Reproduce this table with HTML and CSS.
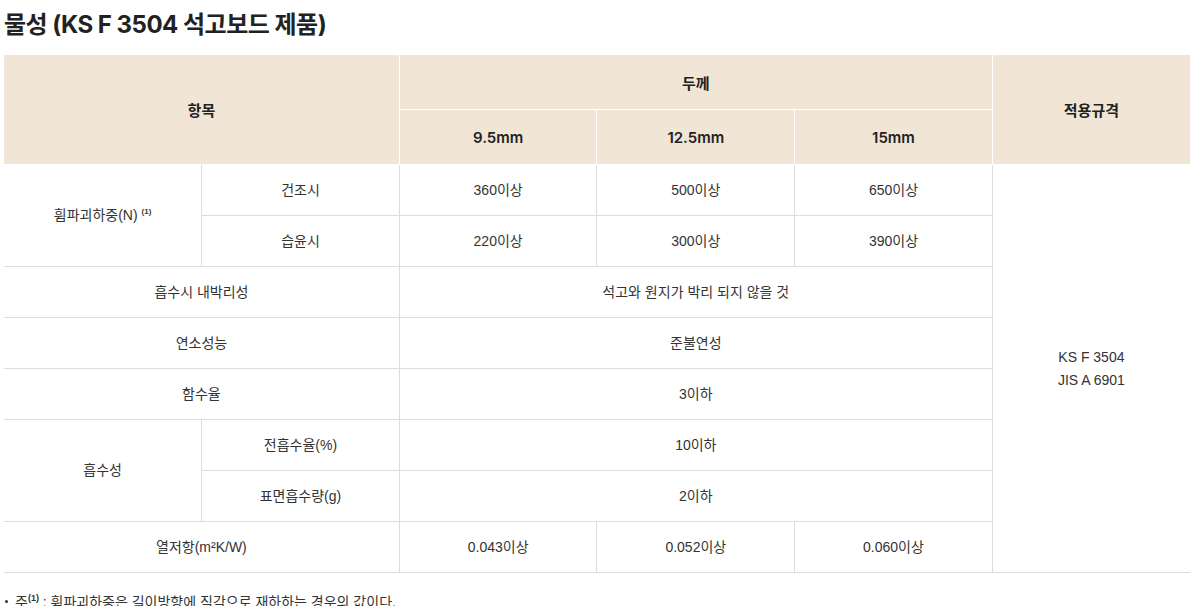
FILE: index.html
```html
<!DOCTYPE html>
<html lang="ko">
<head>
<meta charset="utf-8">
<link rel="stylesheet" href="styles.css">
</head>
<body>
<div class="page">
  <h2 class="title">물성 (KS F 3504 석고보드 제품)</h2>
  <table class="spec">
    <colgroup>
      <col><col><col><col><col><col>
    </colgroup>
    <thead>
      <tr>
        <th colspan="2" rowspan="2">항목</th>
        <th colspan="3">두께</th>
        <th rowspan="2">적용규격</th>
      </tr>
      <tr>
        <th>9.5mm</th>
        <th>12.5mm</th>
        <th>15mm</th>
      </tr>
    </thead>
    <tbody>
      <tr>
        <td rowspan="2">휨파괴하중(N) <sup>(1)</sup></td>
        <td>건조시</td>
        <td>360이상</td>
        <td>500이상</td>
        <td>650이상</td>
        <td rowspan="8" class="last">KS F 3504<br>JIS A 6901</td>
      </tr>
      <tr>
        <td>습윤시</td>
        <td>220이상</td>
        <td>300이상</td>
        <td>390이상</td>
      </tr>
      <tr>
        <td colspan="2">흡수시 내박리성</td>
        <td colspan="3">석고와 원지가 박리 되지 않을 것</td>
      </tr>
      <tr>
        <td colspan="2">연소성능</td>
        <td colspan="3">준불연성</td>
      </tr>
      <tr>
        <td colspan="2">함수율</td>
        <td colspan="3">3이하</td>
      </tr>
      <tr>
        <td rowspan="2">흡수성</td>
        <td>전흡수율(%)</td>
        <td colspan="3">10이하</td>
      </tr>
      <tr>
        <td>표면흡수량(g)</td>
        <td colspan="3">2이하</td>
      </tr>
      <tr>
        <td colspan="2">열저항(m²K/W)</td>
        <td>0.043이상</td>
        <td>0.052이상</td>
        <td>0.060이상</td>
      </tr>
    </tbody>
  </table>
  <ul class="notes">
    <li>주<sup>(1)</sup> : 휨파괴하중은 길이방향에 직각으로 재하하는 경우의 값이다.</li>
  </ul>
</div>
</body>
</html>
```

FILE: styles.css
```css
html, body {
  margin: 0;
  padding: 0;
  background: #ffffff;
}

.page {
  padding: 0 7px 0 4px;
  font-family: "Liberation Sans", "Noto Sans CJK KR", sans-serif;
  color: #333333;
}

.title {
  margin: 0;
  padding: 8px 0 0 0;
  height: 55px;
  box-sizing: border-box;
  font-family: "Inter", "Noto Sans CJK KR", sans-serif;
  font-size: 24px;
  font-weight: 700;
  color: #222222;
  letter-spacing: -0.5px;
  line-height: 34px;
}

.spec {
  width: 1186px;
  border-collapse: collapse;
  table-layout: fixed;
  font-size: 14px;
}

.spec col {
  width: 16.666%;
}

.spec th {
  background: #f1e6d6;
  font-family: "Inter", "Noto Sans CJK KR", sans-serif;
  font-weight: 600;
  font-size: 15px;
  color: #222222;
  height: 54px;
  padding: 0;
  border: 1px solid #ffffff;
  border-top: none;
  text-align: center;
  vertical-align: middle;
}

.spec thead tr:first-child th:first-child {
  border-left: none;
}

.spec thead tr:first-child th:last-child {
  border-right: none;
}

.spec td {
  height: 50px;
  padding: 0;
  border: 1px solid #dddddd;
  text-align: center;
  vertical-align: middle;
  color: #333333;
  line-height: 23px;
}

.spec tbody tr td:first-child {
  border-left: none;
}

.spec td.last {
  border-right: none;
}

.spec tbody tr:first-child td {
  border-top: none;
}

.spec sup {
  font-size: 8px;
  font-weight: 700;
  vertical-align: 6px;
  line-height: 0;
}

.notes {
  margin: 18px 0 0 0;
  padding: 0 0 0 11px;
  font-size: 14px;
  color: #333333;
  list-style: none;
}

.notes li {
  position: relative;
}

.notes li::before {
  content: "";
  position: absolute;
  left: -10px;
  top: 9px;
  width: 3px;
  height: 3px;
  border-radius: 50%;
  background: #333333;
}

.notes sup {
  font-size: 9px;
  font-weight: 700;
  vertical-align: 6px;
  line-height: 0;
}
```
